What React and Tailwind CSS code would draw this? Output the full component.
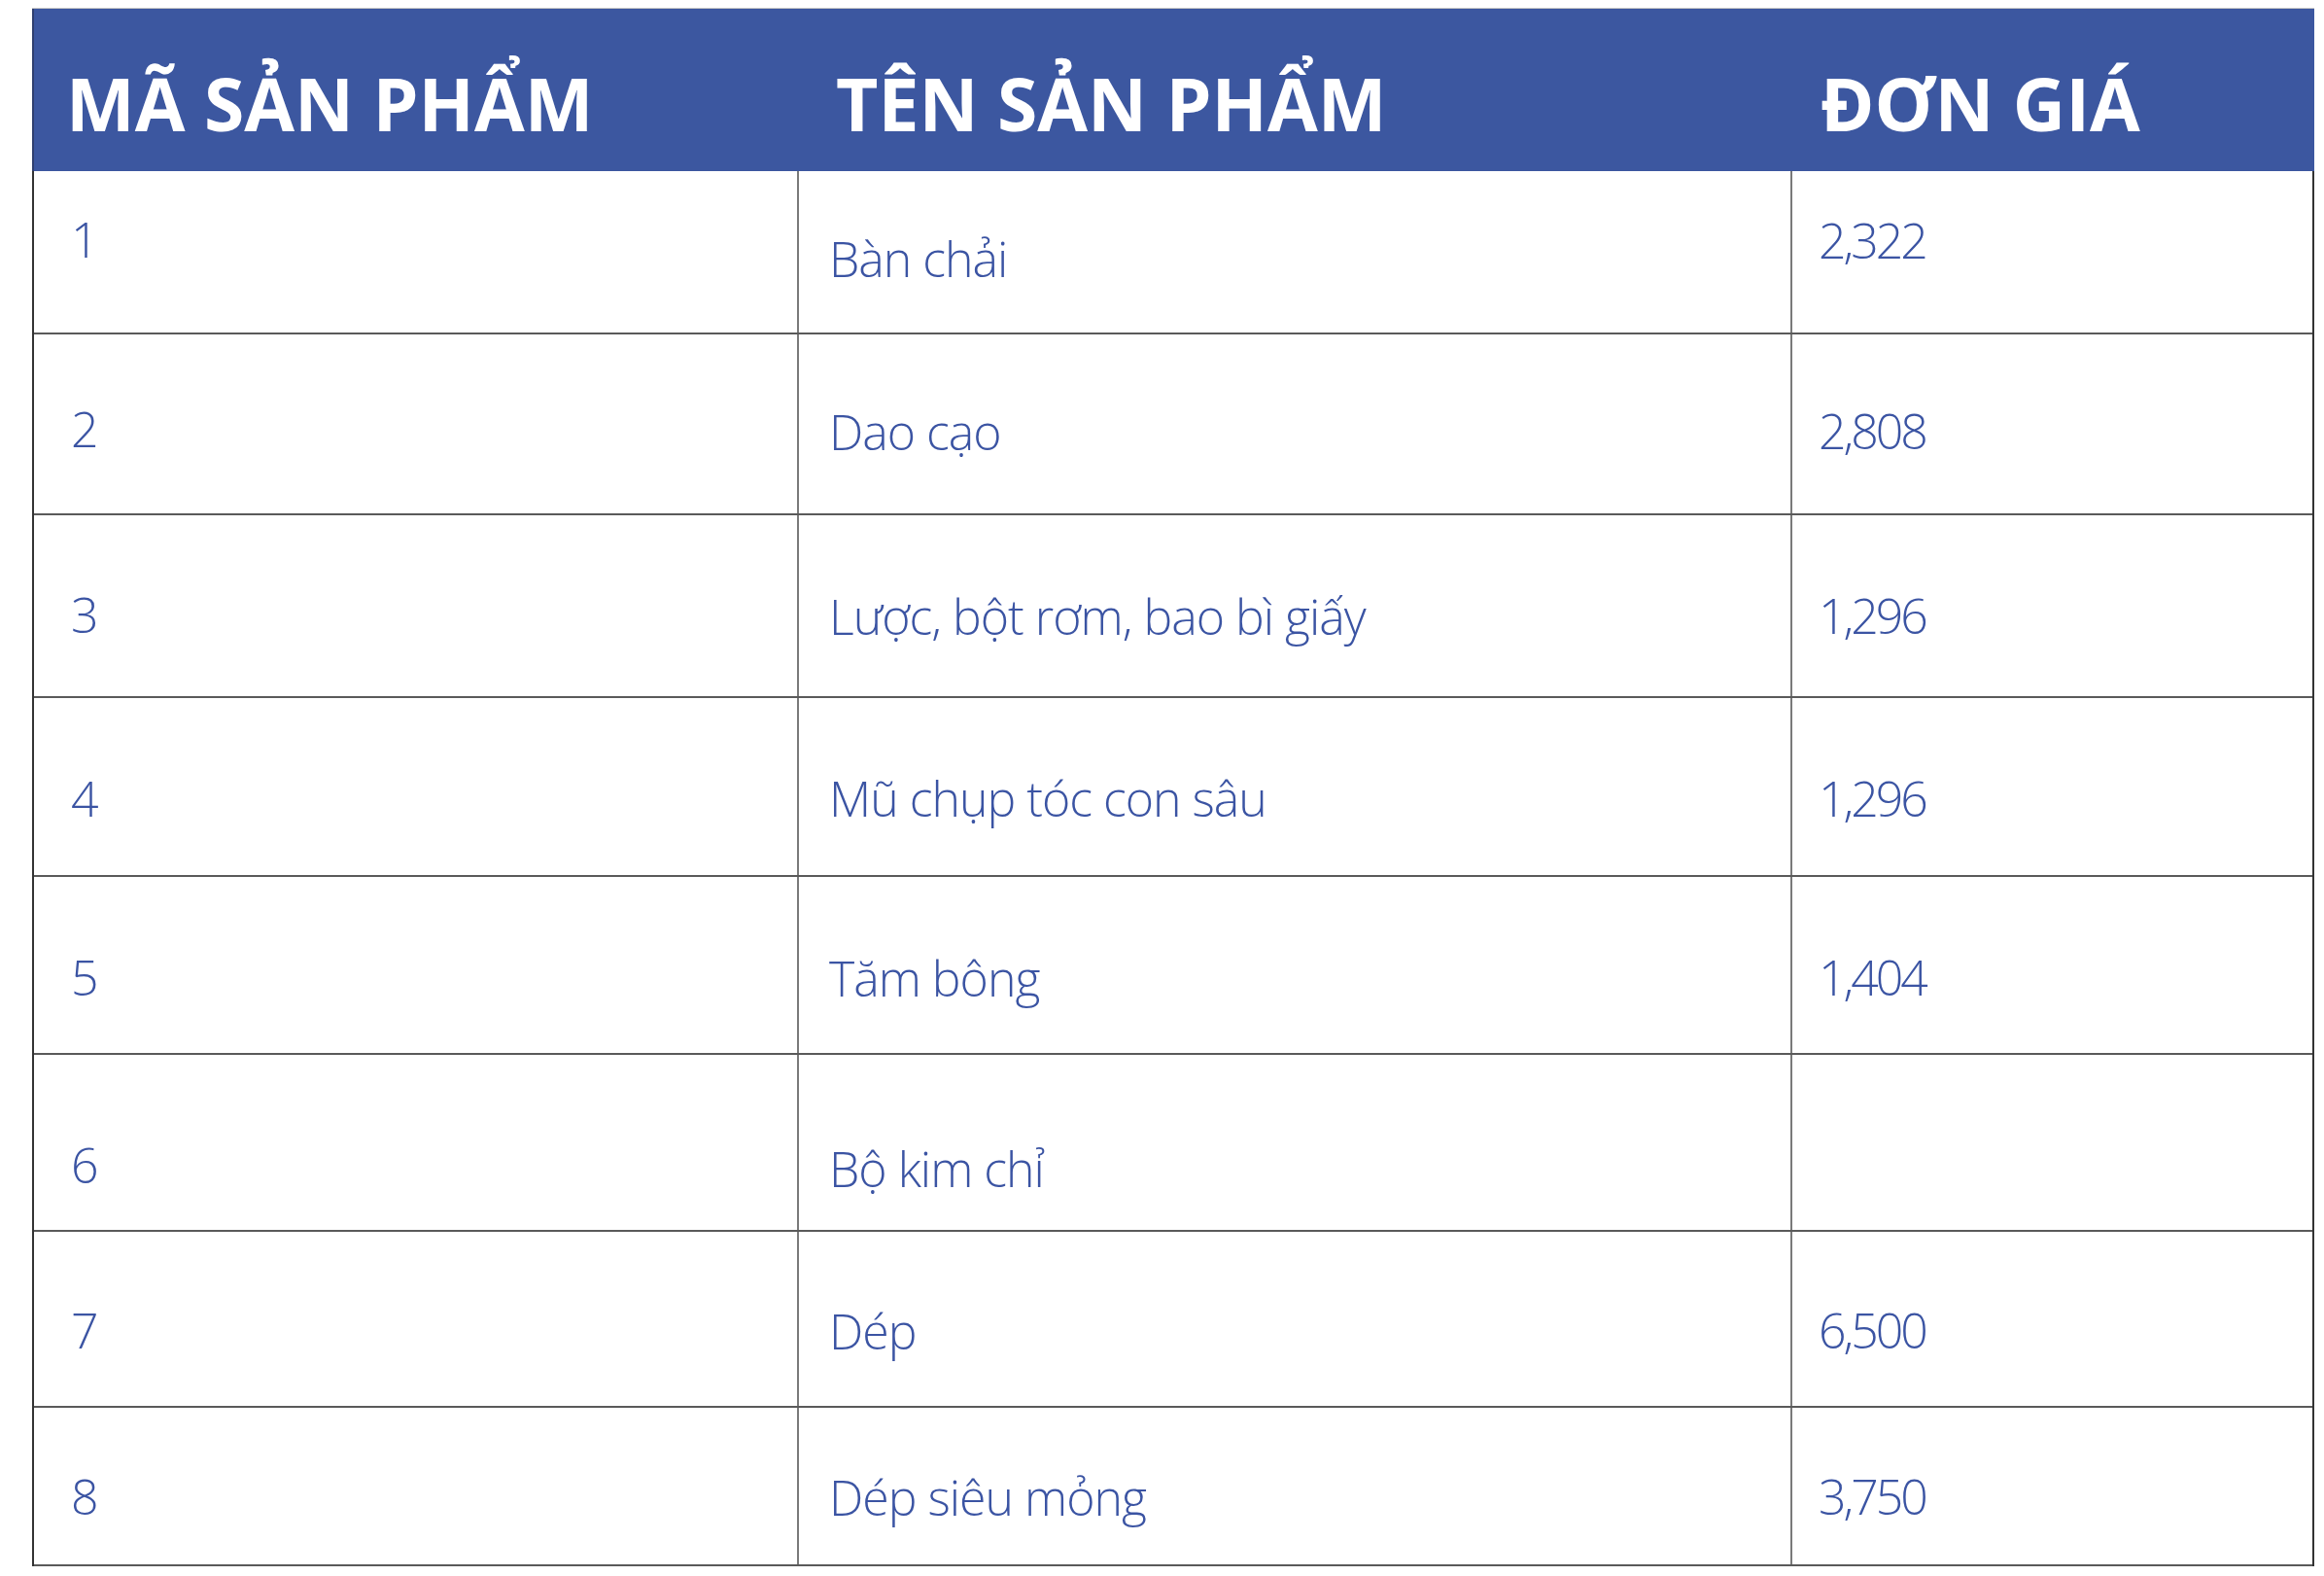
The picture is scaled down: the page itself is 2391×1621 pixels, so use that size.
import React from "react";

const rows = [
  { id: "1", name: "Bàn chải", price: "2,322", h: "h-[168px]", pts: ["pt-[45px]", "pt-[65px]", "pt-[46px]"] },
  { id: "2", name: "Dao cạo", price: "2,808", h: "h-[186px]", pts: ["pt-[72px]", "pt-[75px]", "pt-[74px]"] },
  { id: "3", name: "Lược, bột rơm, bao bì giấy", price: "1,296", h: "h-[188px]", pts: ["pt-[77px]", "pt-[79px]", "pt-[78px]"] },
  { id: "4", name: "Mũ chụp tóc con sâu", price: "1,296", h: "h-[184px]", pts: ["pt-[78px]", "pt-[78px]", "pt-[78px]"] },
  { id: "5", name: "Tăm bông", price: "1,404", h: "h-[183px]", pts: ["pt-[78px]", "pt-[79px]", "pt-[78px]"] },
  { id: "6", name: "Bộ kim chỉ", price: "", h: "h-[182px]", pts: ["pt-[88px]", "pt-[92px]", "pt-[88px]"] },
  { id: "7", name: "Dép", price: "6,500", h: "h-[181px]", pts: ["pt-[76px]", "pt-[77px]", "pt-[76px]"] },
  { id: "8", name: "Dép siêu mỏng", price: "3,750", h: "h-[163px]", pts: ["pt-[66px]", "pt-[67px]", "pt-[66px]"] },
];

export default function App() {
  return (
    <div className="min-h-screen bg-white pt-[8px] pl-[33px] font-['Open_Sans',sans-serif]">
      <div className="w-[2348px] border-t border-[#c8c8c8]">
        {/* header */}
        <div className="grid grid-cols-[789px_1022px_537px] h-[167px] bg-[#3c57a0] border-l-2 border-[#2f3f70] text-white font-bold text-[75px] leading-none">
          <div className="pt-[60px] pl-[33px]">MÃ SẢN PHẨM</div>
          <div className="pt-[60px] pl-[36px]">TÊN SẢN PHẨM</div>
          <div className="pt-[60px] pl-[27px]">ĐƠN GIÁ</div>
        </div>

        {/* body */}
        <div className="border-l-2 border-r-2 border-[#333]">
          {rows.map((r) => (
            <div
              key={r.id}
              className={`grid grid-cols-[787px_1022px_535px] ${r.h} border-b-2 border-[#5a5a5a] text-[#3b54a3] font-light text-[50px] leading-none`}
            >
              <div className={`${r.pts[0]} pl-[38px] border-r-2 border-[#7a7a7a]`}>{r.id}</div>
              <div className={`${r.pts[1]} pl-[31px] border-r-2 border-[#7a7a7a] tracking-[-0.02em]`}>{r.name}</div>
              <div className={`${r.pts[2]} pl-[27px] tracking-[-0.06em]`}>{r.price}</div>
            </div>
          ))}
        </div>
      </div>
    </div>
  );
}
